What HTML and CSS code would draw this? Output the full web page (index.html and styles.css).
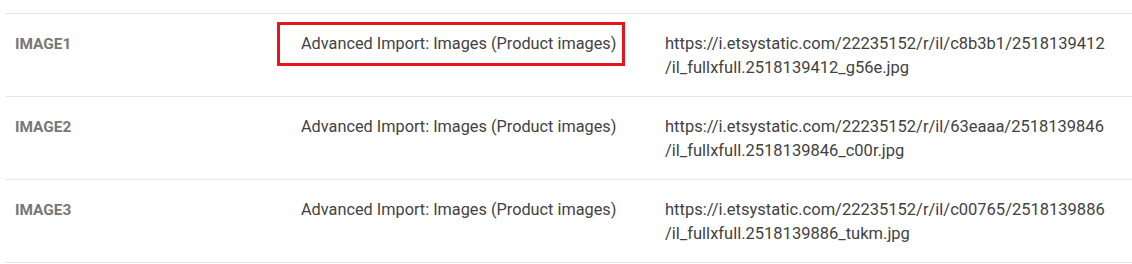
FILE: index.html
```html
<!DOCTYPE html>
<html>
<head>
<meta charset="utf-8">
<link rel="stylesheet" href="styles.css">
</head>
<body>
<div class="table">
  <div class="row">
    <div class="key">IMAGE1</div>
    <div class="source"><span class="hl">Advanced Import: Images (Product images)</span></div>
    <div class="value">https://i.etsystatic.com/22235152/r/il/c8b3b1/2518139412<br>/il_fullxfull.2518139412_g56e.jpg</div>
  </div>
  <div class="row">
    <div class="key">IMAGE2</div>
    <div class="source">Advanced Import: Images (Product images)</div>
    <div class="value">https://i.etsystatic.com/22235152/r/il/63eaaa/2518139846<br>/il_fullxfull.2518139846_c00r.jpg</div>
  </div>
  <div class="row">
    <div class="key">IMAGE3</div>
    <div class="source">Advanced Import: Images (Product images)</div>
    <div class="value">https://i.etsystatic.com/22235152/r/il/c00765/2518139886<br>/il_fullxfull.2518139886_tukm.jpg</div>
  </div>
</div>
</body>
</html>
```
FILE: styles.css
```css
html, body {
  margin: 0;
  padding: 0;
  background: #ffffff;
}
body {
  font-family: Roboto, "Liberation Sans", sans-serif;
  padding: 13px 0 0 5px;
}
.table {
  border-top: 1px solid #e6e6e6;
}
.row {
  display: grid;
  grid-template-columns: 296px 364px 1fr;
  height: 83px;
  box-sizing: border-box;
  padding-top: 18px;
  border-bottom: 1px solid #e6e6e6;
  font-size: 16.5px;
  line-height: 24px;
}
.key {
  padding-left: 10px;
  font-weight: 700;
  color: #777777;
  font-size: 15.4px;
}
.source {
  color: #424242;
  font-size: 16.3px;
}
.value {
  color: #424242;
}
.hl {
  display: inline-block;
  position: relative;
}
.hl::after {
  content: "";
  position: absolute;
  left: -24px;
  top: -10px;
  right: -9px;
  bottom: -10px;
  border: 3px solid #e8141e;
}
```
